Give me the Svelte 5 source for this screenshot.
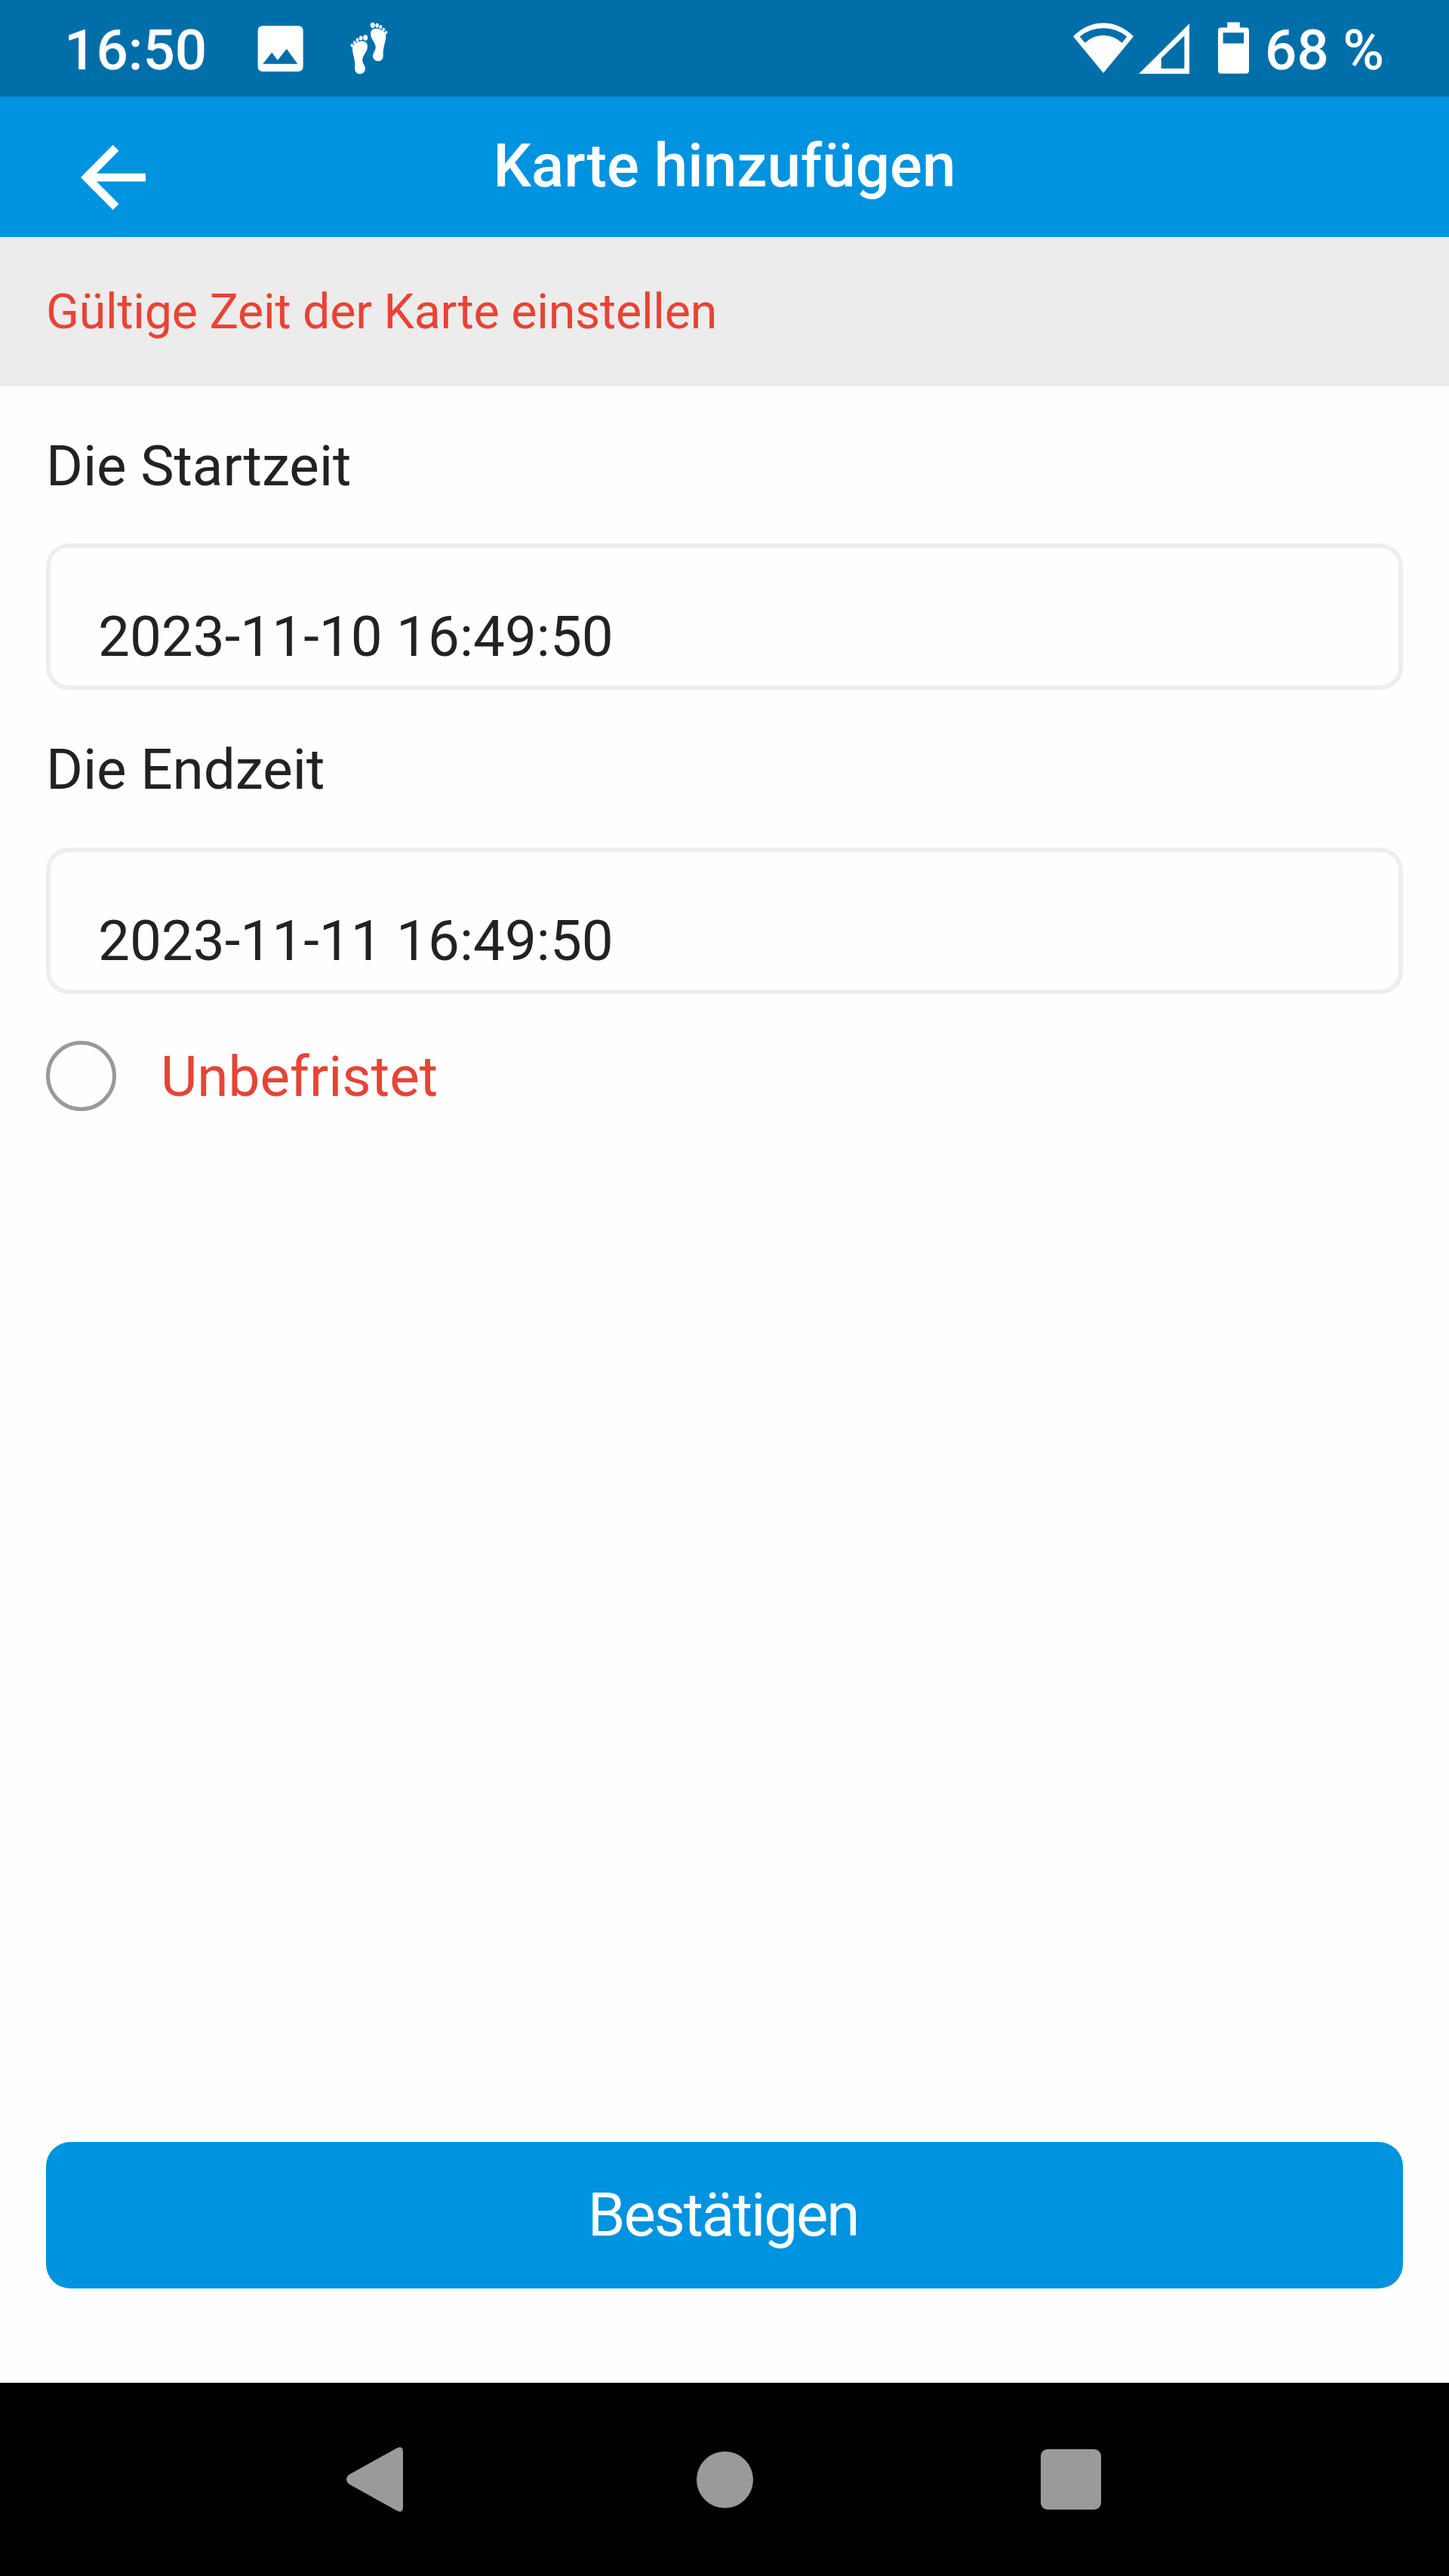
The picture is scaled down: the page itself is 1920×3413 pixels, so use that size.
<script lang="ts">
	let startTime = $state('2023-11-10 16:49:50');
	let endTime = $state('2023-11-11 16:49:50');
	let permanent = $state(false);
</script>

<div class="screen">
	<div class="status-bar">
		<span class="clock">16:50</span>
		<svg class="icon-image" viewBox="844 100 182 184">
			<path
				fill-rule="evenodd"
				d="M864 101H1006Q1026 101 1026 121V263Q1026 283 1006 283H864Q845 283 845 263V121Q845 101 864 101ZM865 253H1004L960 193L924 238L901 207Z"
			/>
		</svg>
		<svg class="icon-steps" viewBox="1205 85 160 215">
			<path
				d="M1220 198C1219 177 1237 165 1258 164C1275 163 1282 174 1280 190C1278 208 1260 222 1260 240C1260 253 1271 260 1271 274C1271 287 1262 295 1250 295C1237 295 1230 286 1230 273C1231 258 1230 246 1227 233C1224 220 1221 211 1220 198Z"
			/>
			<ellipse cx="1272" cy="150" rx="9" ry="11" />
			<ellipse cx="1254" cy="152" rx="7" ry="9" />
			<ellipse cx="1240" cy="159" rx="6" ry="8" />
			<ellipse cx="1228" cy="169" rx="5" ry="7" />
			<ellipse cx="1218" cy="181" rx="5" ry="7" />
			<path
				d="M1354 147C1355 126 1336 114 1316 113C1299 112 1291 123 1293 139C1295 157 1313 171 1313 189C1313 202 1302 209 1302 223C1302 236 1311 244 1323 244C1336 244 1343 235 1343 222C1342 207 1344 195 1347 182C1350 169 1353 160 1354 147Z"
			/>
			<ellipse cx="1301" cy="100" rx="9" ry="11" />
			<ellipse cx="1319" cy="101" rx="7" ry="9" />
			<ellipse cx="1333" cy="107" rx="6" ry="8" />
			<ellipse cx="1345" cy="117" rx="5" ry="7" />
			<ellipse cx="1355" cy="129" rx="5" ry="7" />
		</svg>
		<svg class="icon-wifi" viewBox="127 89 240 200">
			<path
				fill-rule="evenodd"
				d="M247 289L127 143Q180 90 247 90T367 143ZM153 144L174 169Q206 139 247 139T321 169L341 144Q300 110 247 110T153 144Z"
			/>
		</svg>
		<svg class="icon-signal" viewBox="387 91 201 200">
			<path fill-rule="evenodd" d="M588 91V291H387ZM568 139L476 229V270H568Z" />
		</svg>
		<svg class="icon-battery" viewBox="702 86 124 206">
			<path
				fill-rule="evenodd"
				d="M739 86H789V107H814Q826 107 826 119V280Q826 292 814 292H714Q702 292 702 280V119Q702 107 714 107H739ZM722 128V171H805V128Z"
			/>
		</svg>
		<span class="percent">68 %</span>
	</div>

	<header class="app-bar">
		<button class="back" aria-label="Zurück">
			<svg viewBox="141 576 256 256">
				<path
					d="M397 688H203L291 599L268 576L141 704L268 832L291 809L203 720H397Z"
				/>
			</svg>
		</button>
		<h1>Karte hinzufügen</h1>
	</header>

	<div class="notice">Gültige Zeit der Karte einstellen</div>

	<main>
		<label for="start">Die Startzeit</label>
		<input id="start" type="text" bind:value={startTime} />
		<label class="end-label" for="end">Die Endzeit</label>
		<input id="end" type="text" bind:value={endTime} />

		<button class="permanent" onclick={() => (permanent = !permanent)}>
			<span class="radio" class:checked={permanent}></span>
			<span class="permanent-label">Unbefristet</span>
		</button>

		<button class="confirm">Bestätigen</button>
	</main>

	<nav class="nav-bar">
		<svg class="nav-back" viewBox="0 0 75 86">
			<path d="M3 37L66 2Q75 -3 75 7V79Q75 89 66 84L3 49Q-3 43 3 37Z" />
		</svg>
		<span class="nav-home"></span>
		<span class="nav-recent"></span>
	</nav>
</div>

<style>
	:global(body) {
		margin: 0;
		background: #fefefe;
	}

	.screen {
		display: flex;
		flex-direction: column;
		width: 1920px;
		height: 3413px;
		font-family: Roboto, sans-serif;
		color: #222;
		background: #fefefe;
		overflow: hidden;
	}

	svg {
		display: block;
		flex: none;
	}

	button {
		padding: 0;
		border: none;
		background: none;
		font: inherit;
	}

	.status-bar {
		display: flex;
		align-items: center;
		box-sizing: border-box;
		height: 128px;
		flex: none;
		padding: 0 86px 0 85px;
		background: #006fa9;
		color: #fff;
		fill: #fff;
		font-size: 74.6px;
		font-weight: 500;
	}

	.clock {
		width: 256px;
		padding-top: 5px;
		white-space: nowrap;
	}

	.icon-image {
		width: 61px;
		height: 61px;
	}

	.icon-steps {
		width: 53px;
		height: 72px;
		margin-left: 60px;
	}

	.icon-wifi {
		width: 80px;
		height: 67px;
		margin: 0 7px 1px auto;
	}

	.icon-signal {
		width: 67px;
		height: 67px;
	}

	.icon-battery {
		width: 41px;
		height: 69px;
		margin: 0 0 2px 38px;
	}

	.percent {
		width: 158px;
		margin-left: 21px;
		padding-top: 5px;
		white-space: nowrap;
	}

	.app-bar {
		display: grid;
		grid-template-columns: 300px 1fr 300px;
		align-items: center;
		height: 186px;
		flex: none;
		background: #0093df;
		color: #fff;
	}

	.back {
		margin-left: 107px;
		padding-top: 27px;
	}

	.back svg {
		width: 86px;
		height: 86px;
		fill: #fff;
	}

	h1 {
		margin: 0;
		padding-bottom: 3px;
		font-size: 80px;
		font-weight: 500;
		text-align: center;
	}

	.notice {
		display: flex;
		align-items: center;
		height: 198px;
		flex: none;
		padding: 0 61px;
		background: #ececec;
		color: #e84335;
		font-size: 64.5px;
		letter-spacing: -0.25px;
	}

	main {
		display: flex;
		flex-direction: column;
		flex: 1;
		padding: 0 61px;
		font-size: 74.6px;
	}

	label {
		box-sizing: border-box;
		height: 208px;
		padding-top: 3px;
		line-height: 205px;
	}

	.end-label {
		height: 209px;
	}

	input {
		box-sizing: border-box;
		width: 100%;
		height: 194px;
		padding: 52px 63px 0;
		border: 6px solid #eee;
		border-radius: 30px;
		outline: none;
		background: transparent;
		color: inherit;
		font: inherit;
	}

	.permanent {
		display: flex;
		align-items: center;
		gap: 59px;
		height: 93px;
		margin-top: 62px;
		color: #e84335;
	}

	.permanent-label {
		padding-top: 2px;
	}

	.radio {
		box-sizing: border-box;
		width: 93px;
		height: 93px;
		border: 5px solid #999;
		border-radius: 50%;
	}

	.radio.checked {
		background: #0093df;
	}

	.confirm {
		height: 194px;
		margin-top: auto;
		margin-bottom: 125px;
		padding-right: 4px;
		border-radius: 32px;
		background: #0093df;
		color: #fff;
		font-size: 80px;
		letter-spacing: -2.2px;
	}

	.nav-bar {
		display: flex;
		align-items: center;
		box-sizing: border-box;
		height: 256px;
		flex: none;
		padding: 0 461px 0 459px;
		justify-content: space-between;
		background: #000;
	}

	.nav-back {
		width: 75px;
		height: 86px;
		fill: #9a9a9a;
	}

	.nav-home {
		width: 75px;
		height: 75px;
		margin-left: 7px;
		border-radius: 50%;
		background: #9a9a9a;
	}

	.nav-recent {
		width: 80px;
		height: 80px;
		border-radius: 9px;
		background: #9a9a9a;
	}
</style>
